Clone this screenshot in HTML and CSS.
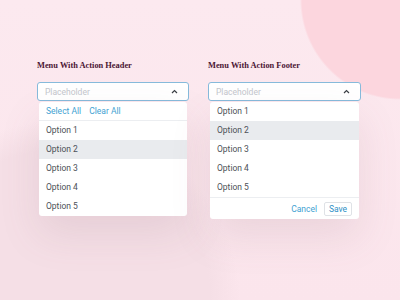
FILE: index.html
```html
<!DOCTYPE html>
<html lang="en">
<head>
  <meta charset="UTF-8">
  <title>Menu with actions</title>
  <link rel="stylesheet" href="styles.css">
</head>
<body>
  <div class="page">
    <div class="column">
      <h2 class="title">Menu With Action Header</h2>
      <div class="select">
        <span class="placeholder">Placeholder</span>
        <svg class="chevron" width="7" height="5" viewBox="0 0 7 5"><polyline points="1,4 3.5,1.5 6,4" /></svg>
      </div>
      <div class="menu">
        <div class="menu-header">
          <a class="link">Select All</a>
          <a class="link">Clear All</a>
        </div>
        <ul class="options">
          <li>Option 1</li>
          <li class="active">Option 2</li>
          <li>Option 3</li>
          <li>Option 4</li>
          <li>Option 5</li>
        </ul>
      </div>
    </div>
    <div class="column">
      <h2 class="title">Menu With Action Footer</h2>
      <div class="select">
        <span class="placeholder">Placeholder</span>
        <svg class="chevron" width="7" height="5" viewBox="0 0 7 5"><polyline points="1,4 3.5,1.5 6,4" /></svg>
      </div>
      <div class="menu">
        <ul class="options">
          <li>Option 1</li>
          <li class="active">Option 2</li>
          <li>Option 3</li>
          <li>Option 4</li>
          <li>Option 5</li>
        </ul>
        <div class="menu-footer">
          <a class="link">Cancel</a>
          <a class="button">Save</a>
        </div>
      </div>
    </div>
  </div>
</body>
</html>
```

FILE: styles.css
```css
* {
  box-sizing: border-box;
}
body {
  margin: 0;
  width: 400px;
  height: 300px;
  overflow: hidden;
  font-family: Roboto, "Liberation Sans", sans-serif;
  background:
    radial-gradient(circle at 400px 0, #fcd6de 98px, rgba(252,214,222,0) 100px),
    radial-gradient(circle at 60px 300px, #f5dfe6 150px, rgba(245,223,230,0) 180px),
    linear-gradient(to bottom, #fce9ef 0%, #fbe5ec 100%);
}

.page {
  display: flex;
  gap: 19px;
  padding: 60px 0 0 37px;
}
.column {
  display: flex;
  flex-direction: column;
  width: 152px;
}
.column + .column {
  width: 153px;
}
.title {
  margin: 0 0 10px;
  font-family: "Liberation Serif", serif;
  font-weight: bold;
  font-size: 8.4px;
  line-height: 12px;
  color: #4b1634;
}

.select {
  display: flex;
  align-items: center;
  justify-content: space-between;
  height: 19px;
  padding: 0 10px 0 7px;
  background: #fff;
  border: 1px solid #86badb;
  border-radius: 3px;
}
.placeholder {
  font-size: 8.5px;
  color: #c3c6cc;
}
.chevron polyline {
  fill: none;
  stroke: #3c4046;
  stroke-width: 1.2;
}

.menu {
  margin: 1px 2px 0;
  background: #fff;
  border-radius: 3px;
  overflow: hidden;
  box-shadow: 0 18px 40px rgba(130, 90, 110, 0.13);
}
.menu-header {
  display: flex;
  gap: 8px;
  align-items: center;
  height: 19px;
  padding: 0 7px;
  border-bottom: 1px solid #eceef1;
}
.link {
  font-size: 8.5px;
  color: #3fa2d2;
}
.options {
  list-style: none;
  margin: 0;
  padding: 0;
}
.options li {
  height: 19px;
  line-height: 19px;
  padding: 0 7px;
  font-size: 8.5px;
  color: #4d5157;
}
.options li.active {
  background: #e9ebee;
}
.menu-footer {
  display: flex;
  justify-content: flex-end;
  align-items: center;
  gap: 7px;
  height: 22px;
  padding: 0 7px;
  border-top: 1px solid #eceef1;
}
.button {
  display: flex;
  align-items: center;
  justify-content: center;
  width: 28px;
  height: 14px;
  font-size: 8.5px;
  color: #2e8fc6;
  border: 1px solid #dfe2e6;
  border-radius: 2px;
}
```
